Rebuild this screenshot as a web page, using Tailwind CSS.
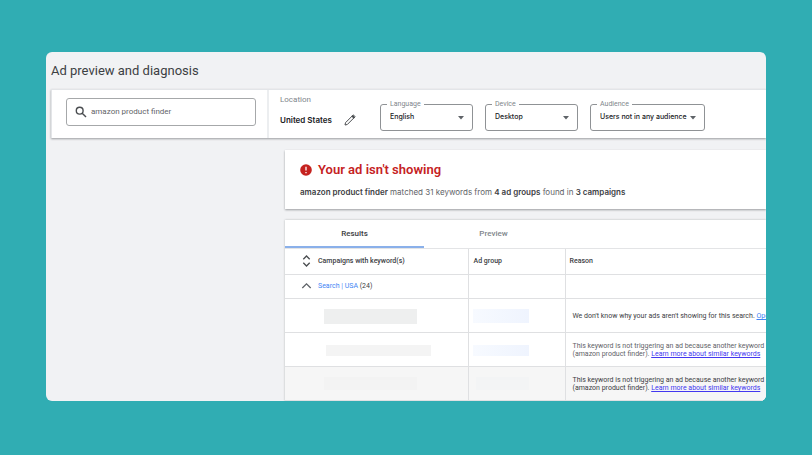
<!DOCTYPE html>
<html lang="en">
<head>
    <meta charset="UTF-8">
    <meta name="viewport" content="width=device-width, initial-scale=1.0">
    <title>Ad preview and diagnosis</title>
    <script src="https://cdn.jsdelivr.net/npm/@tailwindcss/browser@4"></script>
</head>
<body class="bg-[#30adb3] min-h-screen flex px-[46px] pt-[52px] pb-[54px] font-['Roboto',sans-serif] text-[#3c4043]">
    <main class="flex-1 min-w-0 bg-[#f1f2f4] rounded-md overflow-hidden pl-[5px]">
        <h1 class="text-[13px] leading-[37px] text-[#3c4043]">Ad preview and diagnosis</h1>

        <!-- Search bar and filters -->
        <form class="flex bg-white border-t border-l border-[#e3e5e8] shadow-[0_1px_2px_#9a9c9e]">
            <div class="w-[217px] shrink-0 border-r-2 border-[#eceef0] pl-[14px] pr-[11px] py-2">
                <label class="flex items-center gap-1 h-7 border border-[#a6a8aa] rounded-[3px] pl-2">
                    <svg class="w-3 h-3 shrink-0" viewBox="0 0 12 12" fill="none" stroke="#4a4d50" stroke-width="1.4">
                        <circle cx="4.7" cy="4.7" r="3.4"/>
                        <path d="M7.2 7.2L11 11"/>
                    </svg>
                    <input type="text" value="amazon product finder" aria-label="Search term" class="flex-1 min-w-0 text-[8px] text-[#5f6368] outline-none">
                </label>
            </div>
            <div class="pl-[11px] pt-1 w-[111px] shrink-0">
                <p class="text-[8px] leading-3 text-[#80868b]">Location</p>
                <div class="flex items-center gap-3 pt-2">
                    <span class="font-['Inter',sans-serif] text-[8px] leading-3 font-semibold text-[#202124] whitespace-nowrap">United States</span>
                    <button type="button" aria-label="Edit location">
                        <svg class="w-3 h-3" viewBox="0 0 12 12" fill="none" stroke="#4a4d50" stroke-width="1">
                            <path d="M1 11l.5-2.3L8.9 1.300q.5-.5 1 0l.8.8q.5.5 0 1L3.300 10.500z"/>
                            <path d="M8 1.600L10.400 4" stroke-width="2"/>
                        </svg>
                    </button>
                </div>
            </div>
            <div class="flex gap-3 pt-[9px] pb-[7px] font-['Inter',sans-serif]">
                <fieldset class="relative w-[93px] h-[32px] border border-[#8f9295] rounded-[3px]">
                    <legend class="ml-[6px] px-[3px] font-['Roboto',sans-serif] text-[7px] leading-[10px] text-[#80868b]"><label for="language">Language</label></legend>
                    <select id="language" class="block w-full appearance-none pl-[9px] text-[7px] leading-4 font-medium text-[#202124] outline-none">
                        <option>English</option>
                    </select>
                    <svg class="absolute right-2 top-[7px] w-[6px] h-[4px] pointer-events-none" viewBox="0 0 6 4" fill="#5f6368"><path d="M0 0h6L3 3.500z"/></svg>
                </fieldset>
                <fieldset class="relative w-[93px] h-[32px] border border-[#8f9295] rounded-[3px]">
                    <legend class="ml-[6px] px-[3px] font-['Roboto',sans-serif] text-[7px] leading-[10px] text-[#80868b]"><label for="device">Device</label></legend>
                    <select id="device" class="block w-full appearance-none pl-[9px] text-[7px] leading-4 font-medium text-[#202124] outline-none">
                        <option>Desktop</option>
                    </select>
                    <svg class="absolute right-2 top-[7px] w-[6px] h-[4px] pointer-events-none" viewBox="0 0 6 4" fill="#5f6368"><path d="M0 0h6L3 3.500z"/></svg>
                </fieldset>
                <fieldset class="relative w-[115px] h-[32px] border border-[#8f9295] rounded-[3px]">
                    <legend class="ml-[6px] px-[3px] font-['Roboto',sans-serif] text-[7px] leading-[10px] text-[#80868b]"><label for="audience">Audience</label></legend>
                    <select id="audience" class="block w-full appearance-none pl-[9px] text-[7px] leading-4 font-medium text-[#202124] outline-none">
                        <option>Users not in any audience</option>
                    </select>
                    <svg class="absolute right-2 top-[7px] w-[6px] h-[4px] pointer-events-none" viewBox="0 0 6 4" fill="#5f6368"><path d="M0 0h6L3 3.500z"/></svg>
                </fieldset>
            </div>
        </form>

        <div class="ml-[234px] pt-3 flex flex-col gap-[11px]">
            <!-- Diagnosis -->
            <section class="bg-white pl-[15px] pt-3 pb-[11px] shadow-[0_1px_2px_#9a9c9e]">
                <h2 class="flex items-center gap-[6px] text-[13px] leading-4 font-semibold text-[#c5221f]">
                    <svg class="w-3 h-3" viewBox="0 0 12 12">
                        <circle cx="6" cy="6" r="5.800" fill="#c5221f"/>
                        <path d="M6 2.800v3.800M6 7.900v1.300" stroke="#fff" stroke-width="1.300"/>
                    </svg>
                    Your ad isn't showing
                </h2>
                <p class="pt-2 font-['Inter',sans-serif] text-[8px] leading-3 text-[#5f6368]"><b class="font-semibold text-[#3c4043]">amazon product finder</b> matched 31 keywords from <b class="font-semibold text-[#3c4043]">4 ad groups</b> found in <b class="font-semibold text-[#3c4043]">3 campaigns</b></p>
            </section>

            <!-- Results -->
            <section class="bg-white shadow-[0_0_2px_#b4b6b8]">
                <div class="flex border-b border-[#e3e4e6]">
                    <button type="button" class="w-[139px] h-7 pt-[2px] border-b-2 border-[#8ab0ea] text-[8px] font-medium text-[#3c4043]">Results</button>
                    <button type="button" class="w-[139px] h-7 pt-[2px] border-b-2 border-transparent text-[8px] font-medium text-[#80868b]">Preview</button>
                </div>
                <table class="w-full table-fixed border-collapse text-left text-[7px] leading-2 whitespace-nowrap">
                    <thead>
                        <tr class="h-[25px] border-b border-[#dfe0e2]">
                            <th class="w-[183px] border-r border-[#dfe0e2] pl-4 font-medium">
                                <div class="flex items-center gap-[6px]">
                                    <svg class="w-[11px] h-3" viewBox="0 0 11 12" fill="none" stroke="#4a4d50" stroke-width="1.300"><path d="M2.300 4.200L5.500 1l3.200 3.200M2.300 7.800L5.500 11l3.200-3.200"/></svg>
                                    Campaigns with keyword(s)
                                </div>
                            </th>
                            <th class="w-[97px] border-r border-[#dfe0e2] pl-[5px] font-medium">Ad group</th>
                            <th class="pl-1 font-medium">Reason</th>
                        </tr>
                    </thead>
                    <tbody>
                        <tr class="h-6 border-b border-[#dfe0e2]">
                            <td class="border-r border-[#dfe0e2] pl-4">
                                <div class="flex items-center gap-[6px]">
                                    <svg class="w-[11px] h-3" viewBox="0 0 11 12" fill="none" stroke="#5f6368" stroke-width="1.300"><path d="M1.300 8L5.500 3.800 9.700 8"/></svg>
                                    <span><a href="#" class="text-[#4285f4]">Search | USA</a> (24)</span>
                                </div>
                            </td>
                            <td class="border-r border-[#dfe0e2]"></td>
                            <td></td>
                        </tr>
                        <tr class="h-[34px] border-b border-[#dfe0e2]">
                            <td class="border-r border-[#dfe0e2] pl-[39px] pt-[2px]"><div class="w-[93px] h-[15px] bg-[#eeefef]"></div></td>
                            <td class="border-r border-[#dfe0e2] pl-1 pt-[2px]"><div class="w-[56px] h-[14px] bg-linear-to-r from-[#f7faff] to-[#eff4fe]"></div></td>
                            <td class="pl-[7px] pt-[2px] overflow-hidden">We don't know why your ads aren't showing for this search. <a href="#" class="text-[#4285f4] underline">Ope</a></td>
                        </tr>
                        <tr class="h-[34px] border-b border-[#dfe0e2]">
                            <td class="border-r border-[#dfe0e2] pl-[41px] pt-[2px]"><div class="w-[105px] h-[11px] bg-[#f4f4f4]"></div></td>
                            <td class="border-r border-[#dfe0e2] pl-1 pt-[2px]"><div class="w-[56px] h-[11px] bg-linear-to-r from-[#f7faff] to-[#eff4fe]"></div></td>
                            <td class="pl-[7px] pt-[2px] overflow-hidden text-[#5f6368]">This keyword is not triggering an ad because another keyword i<br>(amazon product finder). <a href="#" class="text-[#4338f0] underline">Learn more about similar keywords</a></td>
                        </tr>
                        <tr class="h-[34px] bg-[#f6f6f6] border-b border-[#dfe0e2]">
                            <td class="border-r border-[#dfe0e2] pl-[39px]"><div class="w-[93px] h-[13px] bg-[#f3f3f3]"></div></td>
                            <td class="border-r border-[#dfe0e2] pl-[7px]"><div class="w-[53px] h-[13px] bg-[#f3f4f5]"></div></td>
                            <td class="pl-[7px] pt-[2px] overflow-hidden">This keyword is not triggering an ad because another keyword i<br>(amazon product finder). <a href="#" class="text-[#4338f0] underline">Learn more about similar keywords</a></td>
                        </tr>
                    </tbody>
                </table>
            </section>
        </div>
    </main>
</body>
</html>
